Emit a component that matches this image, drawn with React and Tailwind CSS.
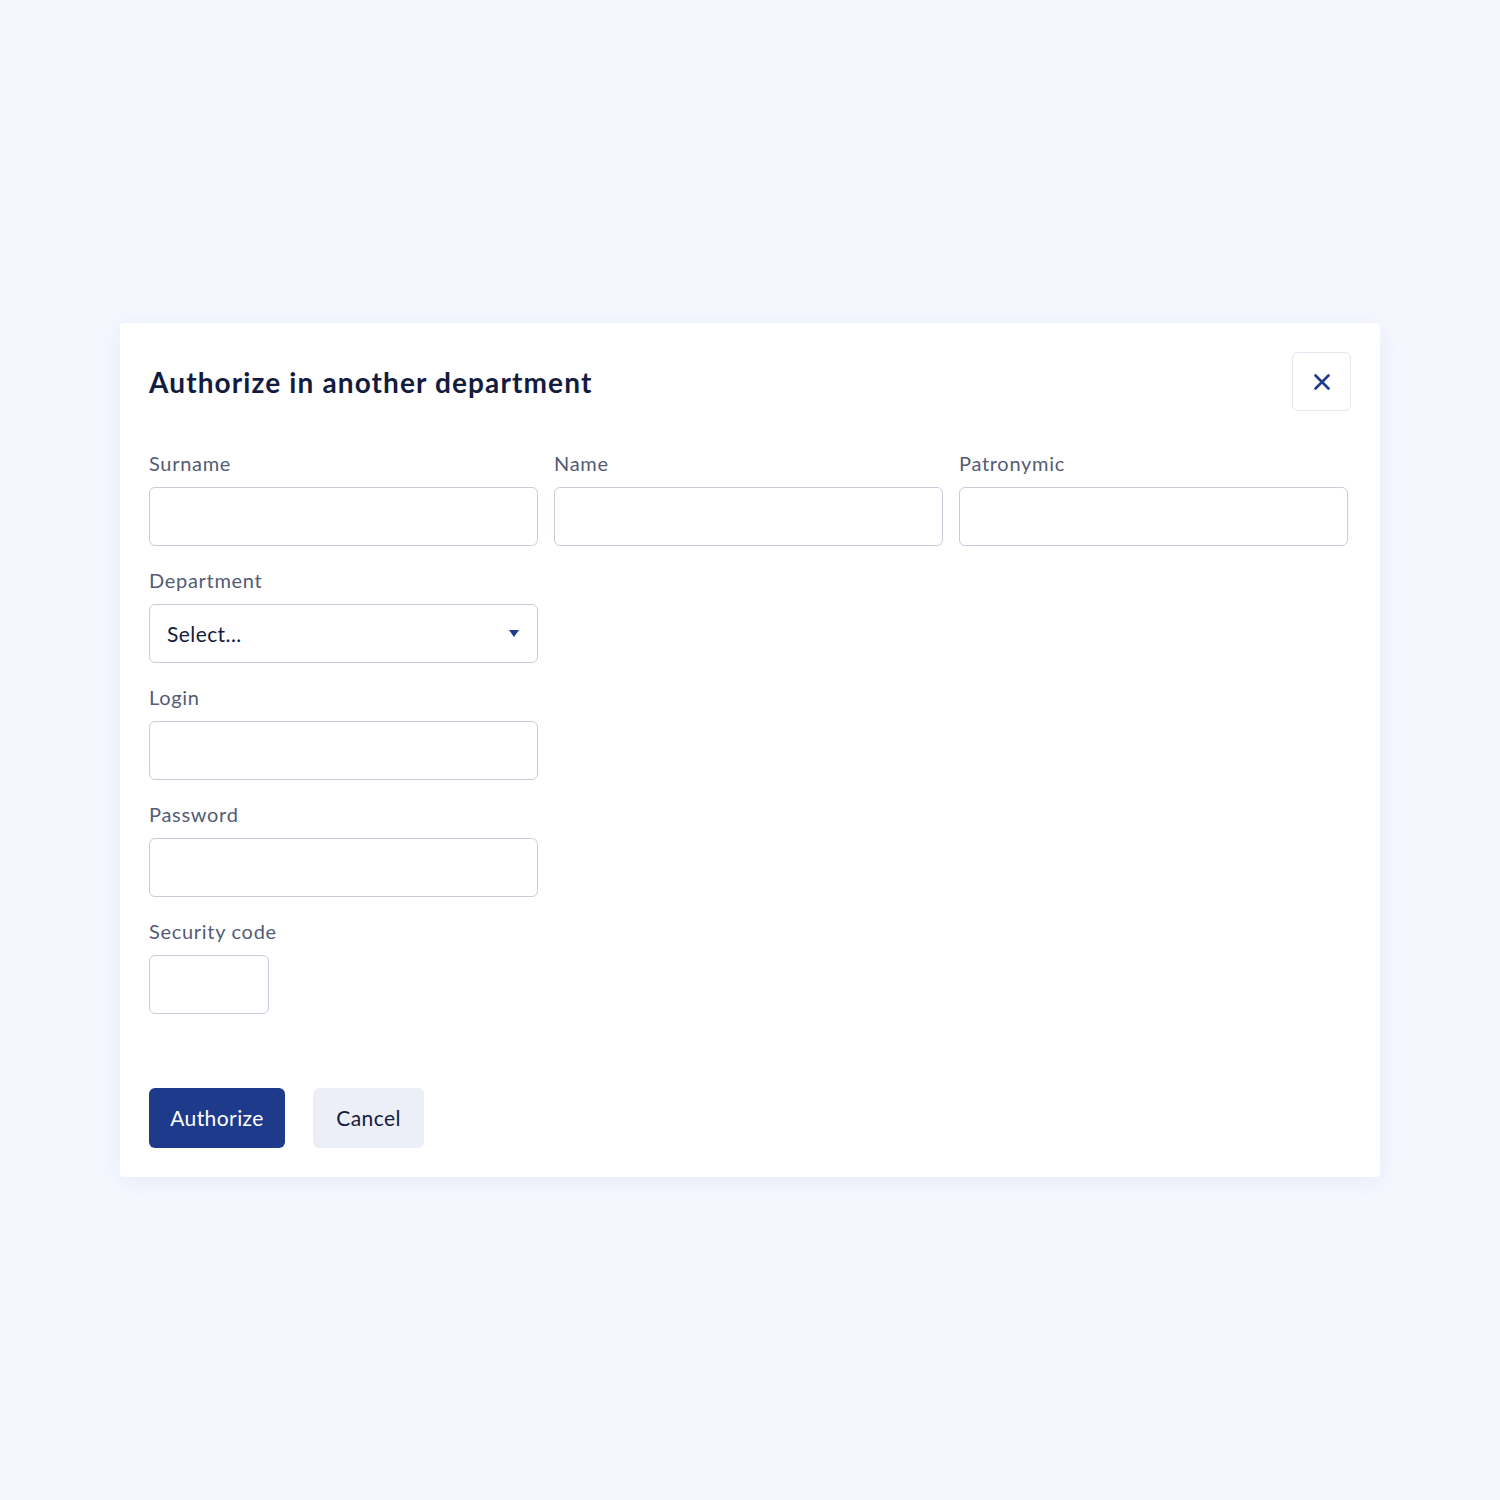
import { X } from 'lucide-react'

const Field = ({ label, className = 'w-full', children }) => (
  <div className="flex flex-col">
    <label className="text-[20px] leading-6 tracking-[0.035em] text-[#535b76]">{label}</label>
    <div className={`mt-3 ${className}`}>
      {children || (
        <input className="h-[59px] w-full rounded-md border border-[#c9cdda] bg-white px-4 outline-none" />
      )}
    </div>
  </div>
)

export default function App() {
  return (
    <div
      className="min-h-[1500px] bg-[#f4f7fe] pt-[323px]"
      style={{ fontFamily: 'Lato, "Noto Sans", sans-serif' }}
    >
      <div className="mx-[120px] rounded bg-white p-[29px] shadow-[0_4px_24px_rgba(30,50,120,0.06)]">
        {/* Header */}
        <div className="flex items-center justify-between">
          <h2 className="text-[28px] font-bold tracking-[0.04em] text-[#131b3e]">Authorize in another department</h2>
          <button className="flex h-[59px] w-[59px] items-center justify-center rounded-md border border-[#e4e8f1] bg-white text-[#1e3a8a]">
            <X size={26} strokeWidth={2.4} />
          </button>
        </div>

        {/* Form */}
        <div className="mt-10 flex flex-col gap-[22px]">
          <div className="grid grid-cols-3 gap-4 pr-[3px]">
            <Field label="Surname" />
            <Field label="Name" />
            <Field label="Patronymic" />
          </div>
          <div className="grid grid-cols-3 gap-4 pr-[3px]">
            <Field label="Department">
              <div className="flex h-[59px] w-full items-center justify-between rounded-md border border-[#c9cdda] bg-white pl-[17px] pr-[18px]">
                <span className="text-[21px] tracking-[0.02em] text-[#141b3c]">Select...</span>
                <svg width="10" height="8" viewBox="0 0 10 8">
                  <path d="M0 0h10L5 7z" fill="#1e3a8a" />
                </svg>
              </div>
            </Field>
          </div>
          <div className="grid grid-cols-3 gap-4 pr-[3px]">
            <Field label="Login" />
          </div>
          <div className="grid grid-cols-3 gap-4 pr-[3px]">
            <Field label="Password" />
          </div>
          <Field label="Security code" className="w-[120px]" />
        </div>

        {/* Actions */}
        <div className="mt-[74px] flex gap-7">
          <button className="h-[60px] w-[136px] rounded-md bg-[#1e3a8a] text-[21px] tracking-[0.02em] text-white">Authorize</button>
          <button className="h-[60px] w-[111px] rounded-md bg-[#eceff8] text-[21px] tracking-[0.02em] text-[#141b3c]">Cancel</button>
        </div>
      </div>
    </div>
  )
}
